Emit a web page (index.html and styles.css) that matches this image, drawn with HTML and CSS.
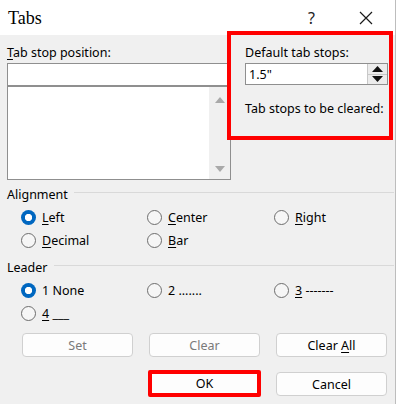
FILE: index.html
```html
<!DOCTYPE html>
<html>
<head>
<meta charset="utf-8">
<link rel="stylesheet" href="styles.css">
</head>
<body>
<div class="dialog">
  <div class="titlebar">
    <span class="title">Tabs</span>
    <span class="help">?</span>
    <svg class="close" width="14" height="14" viewBox="0 0 14 14"><path d="M1 1 L13 13 M13 1 L1 13" stroke="#1a1a1a" stroke-width="1.2" fill="none"/></svg>
  </div>
  <div class="content">
    <div class="top">
      <div class="leftcol">
        <div class="label"><u>T</u>ab stop position:</div>
        <div class="input"></div>
        <div class="list">
          <div class="scroll">
            <svg width="12" height="8" viewBox="0 0 12 8"><path d="M1 7 L6 1 L11 7 Z" fill="#a9a9a9"/></svg>
            <svg width="12" height="8" viewBox="0 0 12 8"><path d="M1 1 L6 7 L11 1 Z" fill="#a9a9a9"/></svg>
          </div>
        </div>
      </div>
      <div class="rightcol">
        <div class="label">Default tab stops:</div>
        <div class="spin">
          <span class="spinval">1.5"</span>
          <div class="spinbtns">
            <div class="sb"><svg width="11" height="6" viewBox="0 0 11 6"><path d="M0 6 L5.5 0 L11 6 Z" fill="#111"/></svg></div>
            <div class="sb"><svg width="11" height="6" viewBox="0 0 11 6"><path d="M0 0 L5.5 6 L11 0 Z" fill="#111"/></svg></div>
          </div>
        </div>
        <div class="label cleared">Tab stops to be cleared:</div>
      </div>
    </div>

    <div class="group align">
      <div class="legend"><span>Alignment</span><div class="rule"></div></div>
      <div class="radios">
        <label class="radio"><span class="dot on"></span><span><u>L</u>eft</span></label>
        <label class="radio"><span class="dot"></span><span><u>C</u>enter</span></label>
        <label class="radio"><span class="dot"></span><span><u>R</u>ight</span></label>
        <label class="radio"><span class="dot"></span><span><u>D</u>ecimal</span></label>
        <label class="radio"><span class="dot"></span><span><u>B</u>ar</span></label>
      </div>
    </div>

    <div class="group leader">
      <div class="legend"><span>Leader</span><div class="rule"></div></div>
      <div class="radios">
        <label class="radio"><span class="dot on"></span><span>1 None</span></label>
        <label class="radio"><span class="dot"></span><span>2 .......</span></label>
        <label class="radio"><span class="dot"></span><span><u>3</u> -------</span></label>
        <label class="radio"><span class="dot"></span><span><u>4</u> ___</span></label>
      </div>
    </div>

    <div class="buttons">
      <div class="btn disabled"><span>Set</span></div>
      <div class="btn disabled"><span>Clear</span></div>
      <div class="btn"><span>Clear <u>A</u>ll</span></div>
      <div class="btn ok"><span>OK</span></div>
      <div class="btn"><span>Cancel</span></div>
    </div>
  </div>
</div>
</body>
</html>
```
FILE: styles.css
```css
* { box-sizing: border-box; }
html, body { margin: 0; padding: 0; background: #ffffff; }
body {
  font-family: "Noto Sans", "Open Sans", sans-serif;
  font-size: 12.5px;
  color: #000;
}
u { text-decoration: underline; text-underline-offset: 2px; }
.dialog {
  width: 396px;
  height: 404px;
  background: #f0f0f0;
  border-right: 1px solid #bdbdbd;
  display: flex;
  flex-direction: column;
  overflow: hidden;
}
.titlebar {
  height: 35px;
  background: #fff;
  display: flex;
  align-items: center;
  padding-left: 8px;
  flex-shrink: 0;
}
.title {
  font-family: "Liberation Serif", "DejaVu Serif", serif;
  font-size: 18px;
  flex: 1;
  padding-top: 1px;
}
.help {
  font-family: "Noto Sans", sans-serif;
  font-size: 16px;
  margin-right: 44px;
  color: #222;
}
.close { margin-right: 22px; }
.content {
  padding-left: 7px;
  display: flex;
  flex-direction: column;
}
.top {
  display: flex;
  align-items: flex-start;
}
.leftcol {
  width: 224px;
  padding-top: 9px;
}
.label { height: 19px; line-height: 17px; }
.input {
  height: 23px;
  background: #fff;
  border: 1px solid #8f8f8f;
  border-right: none;
}
.list {
  height: 94px;
  background: #fff;
  border: 1px solid #8f8f8f;
  display: flex;
  justify-content: flex-end;
}
.scroll {
  width: 21px;
  background: #f0f0f0;
  display: flex;
  flex-direction: column;
  justify-content: space-between;
  align-items: center;
  padding: 9px 0 6px;
}
.rightcol {
  width: 166px;
  height: 109px;
  margin-top: -4px;
  margin-left: -4px;
  border: 4px solid #ff0000;
  padding: 9px 0 0 14px;
}
.spin {
  width: 143px;
  height: 22px;
  background: #fff;
  border: 1px solid #8f8f8f;
  display: flex;
  align-items: center;
  justify-content: space-between;
}
.spinval { padding-left: 3px; }
.spinbtns {
  width: 20px;
  height: 20px;
  display: flex;
  flex-direction: column;
  border-left: 1px solid #c8c8c8;
}
.sb {
  flex: 1;
  background: #ececec;
  display: flex;
  align-items: center;
  justify-content: center;
}
.sb + .sb { border-top: 1px solid #c8c8c8; }
.cleared { margin-top: 15px; }
.group { display: flex; flex-direction: column; }
.align { margin-top: 6px; }
.leader { margin-top: 10px; }
.legend {
  display: flex;
  align-items: center;
  height: 16px;
}
.legend span { line-height: 16px; margin-top: 1px; }
.rule {
  flex: 1;
  height: 1px;
  background: #d9d9d9;
  margin-left: 6px;
  margin-right: 1px;
  margin-top: -4px;
}
.radios {
  display: grid;
  grid-template-columns: 126px 127px 110px;
  padding-left: 14px;
  row-gap: 5px;
  margin-top: 6px;
}
.radio {
  display: flex;
  align-items: center;
  gap: 6px;
  height: 18px;
}
.dot {
  width: 15px;
  height: 15px;
  border-radius: 50%;
  border: 1px solid #6d6d6d;
  background: #f6f6f6;
  flex-shrink: 0;
}
.dot.on {
  border: none;
  background: radial-gradient(circle, #fff 0 3.4px, #0067c0 3.9px);
}
.buttons {
  display: grid;
  grid-template-columns: 111px 111px 111px;
  column-gap: 16px;
  row-gap: 15px;
  padding-left: 15px;
  margin-top: 11px;
}
.btn {
  height: 24px;
  background: #fdfdfd;
  border: 1px solid #d0d0d0;
  border-radius: 4px;
  display: flex;
  align-items: center;
  justify-content: center;
  color: #000;
}
.btn.disabled { color: #7a7a7a; }
.btn.ok {
  grid-column: 2;
  border: 4px solid #ff0000;
  border-radius: 2px;
  height: 27px;
  margin-top: -2px;
  margin-left: -1px;
  margin-right: -1px;
}
```
